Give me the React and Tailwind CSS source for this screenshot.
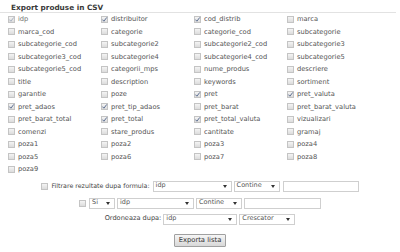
import React from "react";

const ROWS = [
  [["idp", 1], ["distribuitor", 1], ["cod_distrib", 1], ["marca", 0]],
  [["marca_cod", 0], ["categorie", 0], ["categorie_cod", 0], ["subcategorie", 0]],
  [["subcategorie_cod", 0], ["subcategorie2", 0], ["subcategorie2_cod", 0], ["subcategorie3", 0]],
  [["subcategorie3_cod", 0], ["subcategorie4", 0], ["subcategorie4_cod", 0], ["subcategorie5", 0]],
  [["subcategorie5_cod", 0], ["categorii_mps", 0], ["nume_produs", 0], ["descriere", 0]],
  [["title", 0], ["description", 0], ["keywords", 0], ["sortiment", 0]],
  [["garantie", 0], ["poze", 0], ["pret", 1], ["pret_valuta", 1]],
  [["pret_adaos", 1], ["pret_tip_adaos", 1], ["pret_barat", 0], ["pret_barat_valuta", 0]],
  [["pret_barat_total", 0], ["pret_total", 1], ["pret_total_valuta", 1], ["vizualizari", 0]],
  [["comenzi", 0], ["stare_produs", 0], ["cantitate", 0], ["gramaj", 0]],
  [["poza1", 0], ["poza2", 0], ["poza3", 0], ["poza4", 0]],
  [["poza5", 0], ["poza6", 0], ["poza7", 0], ["poza8", 0]],
  [["poza9", 0]],
];

const Box = ({ checked, dim }) => (
  <span className="relative inline-block w-[7px] h-[7px] shrink-0 border border-[#c4c4c4] bg-gradient-to-b from-[#f4f4f4] to-[#dcdcdc]">
    {checked ? (
      <svg viewBox="0 0 7 7" className="absolute -left-px -top-px w-[7px] h-[7px]">
        <path d="M1.4 3.6 L2.9 5.2 L5.8 1.4" fill="none" stroke={dim ? "#a9b2c2" : "#5d6f92"} strokeWidth="1" />
      </svg>
    ) : null}
  </span>
);

const Select = ({ value, w }) => (
  <span className={`flex items-center justify-between h-[11px] border border-[#cfcfcf] bg-white pl-[2px] pr-[4px] text-[6.5px] text-[#555] ${w}`}>
    <span>{value}</span>
    <span className="w-0 h-0 border-l-[2px] border-r-[2px] border-t-[3px] border-l-transparent border-r-transparent border-t-[#333]" />
  </span>
);

export default function App() {
  return (
    <div className="w-[400px] h-[252px] bg-white text-[#555] font-['DejaVu_Sans',sans-serif] text-[6.7px] overflow-hidden">
      <div className="pl-[11px] pt-[3px] h-[13px] text-[7.3px] font-bold text-[#3a3a3a] leading-[9px] border-b border-[#e2e2e2] mr-[4px]">
        Export produse in CSV
      </div>
      <div className="grid grid-cols-[93px_93px_93px_93px] pl-[8px]">
        {ROWS.flat().map(([name, c], i) => (
          <div key={name} className="flex items-center h-[12.5px] gap-[3px]">
            <Box checked={c} dim={i === 0} />
            <span className={i === 0 ? "text-[#777]" : ""}>{name}</span>
          </div>
        ))}
      </div>
      <div className="flex flex-col items-center text-[#444] text-[6.3px]">
        <div className="flex items-center mt-[5px] h-[11px]">
          <Box />
          <span className="ml-[3px] mr-[3px]">Filtrare rezultate dupa formula:</span>
          <Select value="idp" w="w-[79px]" />
          <span className="w-[2px]" />
          <Select value="Contine" w="w-[46px]" />
          <span className="ml-[3px] w-[76px] h-[11px] border border-[#cfcfcf] bg-white" />
        </div>
        <div className="flex items-center mt-[6px] h-[11px]">
          <Box />
          <span className="w-[3px]" />
          <Select value="Si" w="w-[26px]" />
          <span className="w-[2px]" />
          <Select value="idp" w="w-[77px]" />
          <span className="w-[2px]" />
          <Select value="Contine" w="w-[46px]" />
          <span className="ml-[2px] w-[77px] h-[11px] border border-[#cfcfcf] bg-white" />
        </div>
        <div className="flex items-center mt-[5px] h-[11px]">
          <span className="mr-[2px] text-[6.6px]">Ordoneaza dupa:</span>
          <Select value="idp" w="w-[74px]" />
          <span className="w-[2px]" />
          <Select value="Crescator" w="w-[56px]" />
        </div>
        <button className="mt-[9px] h-[13px] px-[4px] border border-[#a0a0a0] rounded-[1px] bg-gradient-to-b from-[#f6f6f6] to-[#d8d8d8] text-[6.8px] text-[#333] leading-[11px]">
          Exporta lista
        </button>
      </div>
    </div>
  );
}
